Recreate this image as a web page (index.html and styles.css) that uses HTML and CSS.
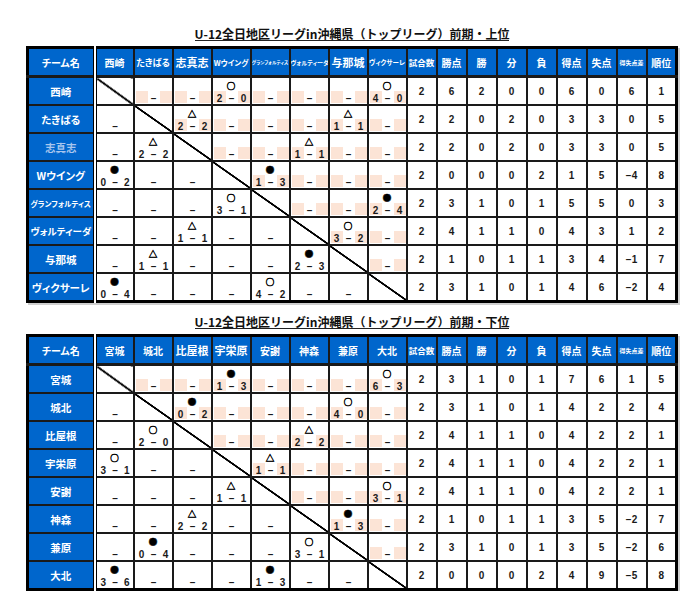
FILE: index.html
```html
<!DOCTYPE html>
<html lang="ja">
<head>
<meta charset="utf-8">
<title>U-12全日地区リーグin沖縄県（トップリーグ）前期</title>
<link rel="stylesheet" href="styles.css">
</head>
<body>
<section class="sheet">
  <h2 class="title"><span>U-12全日地区リーグin沖縄県（トップリーグ）前期・上位</span></h2>
  <table class="league">
    <colgroup><col class="c-team"><col class="c-m"><col class="c-m"><col class="c-m"><col class="c-m"><col class="c-m"><col class="c-m"><col class="c-m"><col class="c-m"><col class="c-s"><col class="c-s"><col class="c-s"><col class="c-s"><col class="c-s"><col class="c-s"><col class="c-s"><col class="c-s"><col class="c-s"></colgroup>
    <thead>
      <tr>
        <th class="tn">チーム名</th><th>西崎</th><th class="h-9">たきばる</th><th class="h-11">志真志</th><th class="h-w">Wウイング</th><th class="h-gf">グランフォルティス</th><th class="h-vt">ヴォルティーダ</th><th class="h-11">与那城</th><th class="h-vx">ヴィクサーレ</th><th class="h-gm">試合数</th><th>勝点</th><th>勝</th><th>分</th><th>負</th><th>得点</th><th>失点</th><th class="h-td">得失点差</th><th>順位</th>
      </tr>
    </thead>
    <tbody>
      <tr>
        <th class="tn">西崎</th>
        <td class="m d"></td>
        <td class="m u"><div class="sc"><span></span><span>–</span><span></span></div></td>
        <td class="m u"><div class="sc"><span></span><span>–</span><span></span></div></td>
        <td class="m u"><div class="sym">○</div><div class="sc"><span>2</span><span>–</span><span>0</span></div></td>
        <td class="m u"><div class="sc"><span></span><span>–</span><span></span></div></td>
        <td class="m u"><div class="sc"><span></span><span>–</span><span></span></div></td>
        <td class="m u"><div class="sc"><span></span><span>–</span><span></span></div></td>
        <td class="m u"><div class="sym">○</div><div class="sc"><span>4</span><span>–</span><span>0</span></div></td>
        <td>2</td><td>6</td><td>2</td><td>0</td><td>0</td><td>6</td><td>0</td><td>6</td><td>1</td>
      </tr>
      <tr>
        <th class="tn">たきばる</th>
        <td class="m"><div class="sc"><span></span><span>–</span><span></span></div></td>
        <td class="m d"></td>
        <td class="m u"><div class="sym">△</div><div class="sc"><span>2</span><span>–</span><span>2</span></div></td>
        <td class="m u"><div class="sc"><span></span><span>–</span><span></span></div></td>
        <td class="m u"><div class="sc"><span></span><span>–</span><span></span></div></td>
        <td class="m u"><div class="sc"><span></span><span>–</span><span></span></div></td>
        <td class="m u"><div class="sym">△</div><div class="sc"><span>1</span><span>–</span><span>1</span></div></td>
        <td class="m u"><div class="sc"><span></span><span>–</span><span></span></div></td>
        <td>2</td><td>2</td><td>0</td><td>2</td><td>0</td><td>3</td><td>3</td><td>0</td><td>5</td>
      </tr>
      <tr>
        <th class="tn pale">志真志</th>
        <td class="m"><div class="sc"><span></span><span>–</span><span></span></div></td>
        <td class="m"><div class="sym">△</div><div class="sc"><span>2</span><span>–</span><span>2</span></div></td>
        <td class="m d"></td>
        <td class="m u"><div class="sc"><span></span><span>–</span><span></span></div></td>
        <td class="m u"><div class="sc"><span></span><span>–</span><span></span></div></td>
        <td class="m u"><div class="sym">△</div><div class="sc"><span>1</span><span>–</span><span>1</span></div></td>
        <td class="m u"><div class="sc"><span></span><span>–</span><span></span></div></td>
        <td class="m u"><div class="sc"><span></span><span>–</span><span></span></div></td>
        <td>2</td><td>2</td><td>0</td><td>2</td><td>0</td><td>3</td><td>3</td><td>0</td><td>5</td>
      </tr>
      <tr>
        <th class="tn">Wウイング</th>
        <td class="m"><div class="sym">●</div><div class="sc"><span>0</span><span>–</span><span>2</span></div></td>
        <td class="m"><div class="sc"><span></span><span>–</span><span></span></div></td>
        <td class="m"><div class="sc"><span></span><span>–</span><span></span></div></td>
        <td class="m d"></td>
        <td class="m u"><div class="sym">●</div><div class="sc"><span>1</span><span>–</span><span>3</span></div></td>
        <td class="m u"><div class="sc"><span></span><span>–</span><span></span></div></td>
        <td class="m u"><div class="sc"><span></span><span>–</span><span></span></div></td>
        <td class="m u"><div class="sc"><span></span><span>–</span><span></span></div></td>
        <td>2</td><td>0</td><td>0</td><td>0</td><td>2</td><td>1</td><td>5</td><td>−4</td><td>8</td>
      </tr>
      <tr>
        <th class="tn l-gf">グランフォルティス</th>
        <td class="m"><div class="sc"><span></span><span>–</span><span></span></div></td>
        <td class="m"><div class="sc"><span></span><span>–</span><span></span></div></td>
        <td class="m"><div class="sc"><span></span><span>–</span><span></span></div></td>
        <td class="m"><div class="sym">○</div><div class="sc"><span>3</span><span>–</span><span>1</span></div></td>
        <td class="m d"></td>
        <td class="m u"><div class="sc"><span></span><span>–</span><span></span></div></td>
        <td class="m u"><div class="sc"><span></span><span>–</span><span></span></div></td>
        <td class="m u"><div class="sym">●</div><div class="sc"><span>2</span><span>–</span><span>4</span></div></td>
        <td>2</td><td>3</td><td>1</td><td>0</td><td>1</td><td>5</td><td>5</td><td>0</td><td>3</td>
      </tr>
      <tr>
        <th class="tn l-vt">ヴォルティーダ</th>
        <td class="m"><div class="sc"><span></span><span>–</span><span></span></div></td>
        <td class="m"><div class="sc"><span></span><span>–</span><span></span></div></td>
        <td class="m"><div class="sym">△</div><div class="sc"><span>1</span><span>–</span><span>1</span></div></td>
        <td class="m"><div class="sc"><span></span><span>–</span><span></span></div></td>
        <td class="m"><div class="sc"><span></span><span>–</span><span></span></div></td>
        <td class="m d"></td>
        <td class="m u"><div class="sym">○</div><div class="sc"><span>3</span><span>–</span><span>2</span></div></td>
        <td class="m u"><div class="sc"><span></span><span>–</span><span></span></div></td>
        <td>2</td><td>4</td><td>1</td><td>1</td><td>0</td><td>4</td><td>3</td><td>1</td><td>2</td>
      </tr>
      <tr>
        <th class="tn">与那城</th>
        <td class="m"><div class="sc"><span></span><span>–</span><span></span></div></td>
        <td class="m"><div class="sym">△</div><div class="sc"><span>1</span><span>–</span><span>1</span></div></td>
        <td class="m"><div class="sc"><span></span><span>–</span><span></span></div></td>
        <td class="m"><div class="sc"><span></span><span>–</span><span></span></div></td>
        <td class="m"><div class="sc"><span></span><span>–</span><span></span></div></td>
        <td class="m"><div class="sym">●</div><div class="sc"><span>2</span><span>–</span><span>3</span></div></td>
        <td class="m d"></td>
        <td class="m u"><div class="sc"><span></span><span>–</span><span></span></div></td>
        <td>2</td><td>1</td><td>0</td><td>1</td><td>1</td><td>3</td><td>4</td><td>−1</td><td>7</td>
      </tr>
      <tr>
        <th class="tn">ヴィクサーレ</th>
        <td class="m"><div class="sym">●</div><div class="sc"><span>0</span><span>–</span><span>4</span></div></td>
        <td class="m"><div class="sc"><span></span><span>–</span><span></span></div></td>
        <td class="m"><div class="sc"><span></span><span>–</span><span></span></div></td>
        <td class="m"><div class="sc"><span></span><span>–</span><span></span></div></td>
        <td class="m"><div class="sym">○</div><div class="sc"><span>4</span><span>–</span><span>2</span></div></td>
        <td class="m"><div class="sc"><span></span><span>–</span><span></span></div></td>
        <td class="m"><div class="sc"><span></span><span>–</span><span></span></div></td>
        <td class="m d"></td>
        <td>2</td><td>3</td><td>1</td><td>0</td><td>1</td><td>4</td><td>6</td><td>−2</td><td>4</td>
      </tr>
    </tbody>
  </table>
</section>

<section class="sheet">
  <h2 class="title"><span>U-12全日地区リーグin沖縄県（トップリーグ）前期・下位</span></h2>
  <table class="league">
    <colgroup><col class="c-team"><col class="c-m"><col class="c-m"><col class="c-m"><col class="c-m"><col class="c-m"><col class="c-m"><col class="c-m"><col class="c-m"><col class="c-s"><col class="c-s"><col class="c-s"><col class="c-s"><col class="c-s"><col class="c-s"><col class="c-s"><col class="c-s"><col class="c-s"></colgroup>
    <thead>
      <tr>
        <th class="tn">チーム名</th><th>宮城</th><th>城北</th><th class="h-11">比屋根</th><th class="h-11">宇栄原</th><th>安謝</th><th>神森</th><th>兼原</th><th>大北</th><th class="h-gm">試合数</th><th>勝点</th><th>勝</th><th>分</th><th>負</th><th>得点</th><th>失点</th><th class="h-td">得失点差</th><th>順位</th>
      </tr>
    </thead>
    <tbody>
      <tr>
        <th class="tn">宮城</th>
        <td class="m d"></td>
        <td class="m u"><div class="sc"><span></span><span>–</span><span></span></div></td>
        <td class="m u"><div class="sc"><span></span><span>–</span><span></span></div></td>
        <td class="m u"><div class="sym">●</div><div class="sc"><span>1</span><span>–</span><span>3</span></div></td>
        <td class="m u"><div class="sc"><span></span><span>–</span><span></span></div></td>
        <td class="m u"><div class="sc"><span></span><span>–</span><span></span></div></td>
        <td class="m u"><div class="sc"><span></span><span>–</span><span></span></div></td>
        <td class="m u"><div class="sym">○</div><div class="sc"><span>6</span><span>–</span><span>3</span></div></td>
        <td>2</td><td>3</td><td>1</td><td>0</td><td>1</td><td>7</td><td>6</td><td>1</td><td>5</td>
      </tr>
      <tr>
        <th class="tn">城北</th>
        <td class="m"><div class="sc"><span></span><span>–</span><span></span></div></td>
        <td class="m d"></td>
        <td class="m u"><div class="sym">●</div><div class="sc"><span>0</span><span>–</span><span>2</span></div></td>
        <td class="m u"><div class="sc"><span></span><span>–</span><span></span></div></td>
        <td class="m u"><div class="sc"><span></span><span>–</span><span></span></div></td>
        <td class="m u"><div class="sc"><span></span><span>–</span><span></span></div></td>
        <td class="m u"><div class="sym">○</div><div class="sc"><span>4</span><span>–</span><span>0</span></div></td>
        <td class="m u"><div class="sc"><span></span><span>–</span><span></span></div></td>
        <td>2</td><td>3</td><td>1</td><td>0</td><td>1</td><td>4</td><td>2</td><td>2</td><td>4</td>
      </tr>
      <tr>
        <th class="tn">比屋根</th>
        <td class="m"><div class="sc"><span></span><span>–</span><span></span></div></td>
        <td class="m"><div class="sym">○</div><div class="sc"><span>2</span><span>–</span><span>0</span></div></td>
        <td class="m d"></td>
        <td class="m u"><div class="sc"><span></span><span>–</span><span></span></div></td>
        <td class="m u"><div class="sc"><span></span><span>–</span><span></span></div></td>
        <td class="m u"><div class="sym">△</div><div class="sc"><span>2</span><span>–</span><span>2</span></div></td>
        <td class="m u"><div class="sc"><span></span><span>–</span><span></span></div></td>
        <td class="m u"><div class="sc"><span></span><span>–</span><span></span></div></td>
        <td>2</td><td>4</td><td>1</td><td>1</td><td>0</td><td>4</td><td>2</td><td>2</td><td>1</td>
      </tr>
      <tr>
        <th class="tn">宇栄原</th>
        <td class="m"><div class="sym">○</div><div class="sc"><span>3</span><span>–</span><span>1</span></div></td>
        <td class="m"><div class="sc"><span></span><span>–</span><span></span></div></td>
        <td class="m"><div class="sc"><span></span><span>–</span><span></span></div></td>
        <td class="m d"></td>
        <td class="m u"><div class="sym">△</div><div class="sc"><span>1</span><span>–</span><span>1</span></div></td>
        <td class="m u"><div class="sc"><span></span><span>–</span><span></span></div></td>
        <td class="m u"><div class="sc"><span></span><span>–</span><span></span></div></td>
        <td class="m u"><div class="sc"><span></span><span>–</span><span></span></div></td>
        <td>2</td><td>4</td><td>1</td><td>1</td><td>0</td><td>4</td><td>2</td><td>2</td><td>1</td>
      </tr>
      <tr>
        <th class="tn">安謝</th>
        <td class="m"><div class="sc"><span></span><span>–</span><span></span></div></td>
        <td class="m"><div class="sc"><span></span><span>–</span><span></span></div></td>
        <td class="m"><div class="sc"><span></span><span>–</span><span></span></div></td>
        <td class="m"><div class="sym">△</div><div class="sc"><span>1</span><span>–</span><span>1</span></div></td>
        <td class="m d"></td>
        <td class="m u"><div class="sc"><span></span><span>–</span><span></span></div></td>
        <td class="m u"><div class="sc"><span></span><span>–</span><span></span></div></td>
        <td class="m u"><div class="sym">○</div><div class="sc"><span>3</span><span>–</span><span>1</span></div></td>
        <td>2</td><td>4</td><td>1</td><td>1</td><td>0</td><td>4</td><td>2</td><td>2</td><td>1</td>
      </tr>
      <tr>
        <th class="tn">神森</th>
        <td class="m"><div class="sc"><span></span><span>–</span><span></span></div></td>
        <td class="m"><div class="sc"><span></span><span>–</span><span></span></div></td>
        <td class="m"><div class="sym">△</div><div class="sc"><span>2</span><span>–</span><span>2</span></div></td>
        <td class="m"><div class="sc"><span></span><span>–</span><span></span></div></td>
        <td class="m"><div class="sc"><span></span><span>–</span><span></span></div></td>
        <td class="m d"></td>
        <td class="m u"><div class="sym">●</div><div class="sc"><span>1</span><span>–</span><span>3</span></div></td>
        <td class="m u"><div class="sc"><span></span><span>–</span><span></span></div></td>
        <td>2</td><td>1</td><td>0</td><td>1</td><td>1</td><td>3</td><td>5</td><td>−2</td><td>7</td>
      </tr>
      <tr>
        <th class="tn">兼原</th>
        <td class="m"><div class="sc"><span></span><span>–</span><span></span></div></td>
        <td class="m"><div class="sym">●</div><div class="sc"><span>0</span><span>–</span><span>4</span></div></td>
        <td class="m"><div class="sc"><span></span><span>–</span><span></span></div></td>
        <td class="m"><div class="sc"><span></span><span>–</span><span></span></div></td>
        <td class="m"><div class="sc"><span></span><span>–</span><span></span></div></td>
        <td class="m"><div class="sym">○</div><div class="sc"><span>3</span><span>–</span><span>1</span></div></td>
        <td class="m d"></td>
        <td class="m u"><div class="sc"><span></span><span>–</span><span></span></div></td>
        <td>2</td><td>3</td><td>1</td><td>0</td><td>1</td><td>3</td><td>5</td><td>−2</td><td>6</td>
      </tr>
      <tr>
        <th class="tn">大北</th>
        <td class="m"><div class="sym">●</div><div class="sc"><span>3</span><span>–</span><span>6</span></div></td>
        <td class="m"><div class="sc"><span></span><span>–</span><span></span></div></td>
        <td class="m"><div class="sc"><span></span><span>–</span><span></span></div></td>
        <td class="m"><div class="sc"><span></span><span>–</span><span></span></div></td>
        <td class="m"><div class="sym">●</div><div class="sc"><span>1</span><span>–</span><span>3</span></div></td>
        <td class="m"><div class="sc"><span></span><span>–</span><span></span></div></td>
        <td class="m"><div class="sc"><span></span><span>–</span><span></span></div></td>
        <td class="m d"></td>
        <td>2</td><td>0</td><td>0</td><td>0</td><td>2</td><td>4</td><td>9</td><td>−5</td><td>8</td>
      </tr>
    </tbody>
  </table>
</section>
</body>
</html>
```
FILE: styles.css
```css
* { box-sizing: border-box; margin: 0; padding: 0; }

body {
  background: #fff;
  color: #151515;
  font-family: "Liberation Sans", "Noto Sans CJK JP", sans-serif;
}

.sheet {
  width: 652px;
  margin-left: 26px;
}

.title {
  display: flex;
  justify-content: center;
  margin: 27px 0 5px;
}
.sheet + .sheet .title { margin-top: 12px; }

.title span {
  font-family: "Noto Sans CJK JP", sans-serif;
  font-weight: 700;
  font-size: 12px;
  line-height: 13px;
  color: #111;
  border-bottom: 1px solid #222;
}

.league {
  width: 652px;
  table-layout: fixed;
  border-collapse: collapse;
  border: 3px solid #000;
  box-shadow: 2px 2px 0 #cfcfcf;
}

.c-team { width: 67px; }
.c-m { width: 39px; }
.c-s { width: 30px; }

.league th,
.league td {
  border: 2px solid #1a1a1a;
  padding: 0;
  text-align: center;
  vertical-align: middle;
  white-space: nowrap;
  overflow: hidden;
}

.league thead tr { height: 29px; }
.league tbody tr { height: 27.5px; }

.league th {
  background: #0066cc;
  color: #fff;
  font-family: "Noto Sans CJK JP", sans-serif;
  font-weight: 700;
  font-size: 10px;
  font-feature-settings: "palt";
  letter-spacing: 0;
}

.league thead th { border-bottom-width: 3px; }
.league .tn { border-right: 4px double #000; }

/* header text sizes (shrink to fit like the sheet) */
.h-9 { font-size: 9px !important; }
.h-11 { font-size: 11px !important; }
.h-w { font-size: 7.5px !important; }
.h-gf { font-size: 4.5px !important; }
.h-vt { font-size: 6px !important; }
.h-vx { font-size: 6.5px !important; }
.h-gm { font-size: 8.5px !important; }
.h-td { font-size: 6px !important; }

tbody .tn { font-size: 10.5px; }
tbody .tn.l-gf { font-size: 7.5px; }
tbody .tn.l-vt { font-size: 9.5px; }
tbody .tn.pale { color: #a9c6ee; }

.league td {
  font-size: 10px;
  font-weight: 700;
  color: #1a1a1a;
}

.league td.m { vertical-align: bottom; }

.sym {
  height: 13px;
  line-height: 15px;
  font-family: "Noto Sans CJK JP", sans-serif;
  font-size: 8.5px;
  font-weight: 700;
  color: #000;
  -webkit-text-stroke: 0.5px #000;
}

.sc {
  display: flex;
  height: 12px;
  margin: 0 0 1px 1px;
}

.sc span {
  flex: 1;
  height: 12px;
  line-height: 16px;
}

.u .sc span:first-child,
.u .sc span:last-child { background: #fce4d6; }

.league td.d {
  background: linear-gradient(to top right,
    transparent calc(50% - 1.2px),
    #000 calc(50% - 0.7px),
    #000 calc(50% + 0.7px),
    transparent calc(50% + 1.2px));
}
```
